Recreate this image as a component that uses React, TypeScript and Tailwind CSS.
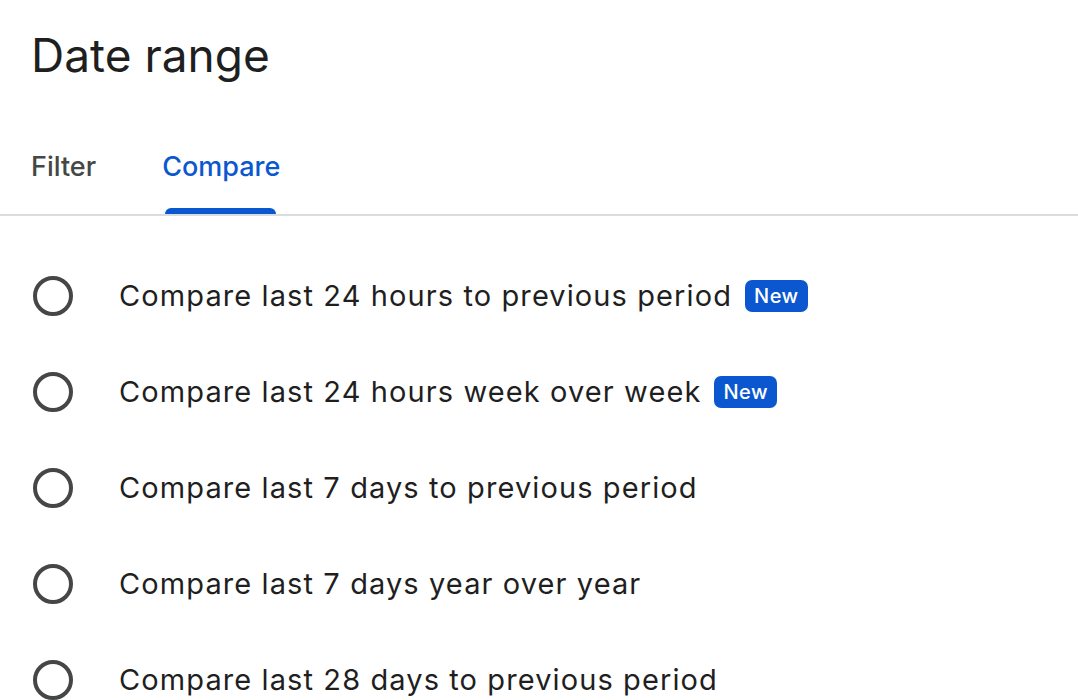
const options = [
  { label: "Compare last 24 hours to previous period", isNew: true },
  { label: "Compare last 24 hours week over week", isNew: true },
  { label: "Compare last 7 days to previous period", isNew: false },
  { label: "Compare last 7 days year over year", isNew: false },
  { label: "Compare last 28 days to previous period", isNew: false },
];

export default function App() {
  return (
    <div
      className="w-[1078px] h-[700px] overflow-hidden bg-white text-[#1f1f1f]"
      style={{ fontFamily: "Inter, Roboto, sans-serif" }}
    >
      <h1 className="pl-[31px] pt-[23px] text-[46px] leading-[64px] font-normal">Date range</h1>

      <div className="mt-[62px] flex items-end gap-[66px] border-b-2 border-[#dadce0] pl-[31px]">
        <div className="pb-[29px] text-[27px] leading-[36px] font-medium text-[#444746]">Filter</div>
        <div className="relative pb-[29px] text-[27px] leading-[36px] font-medium text-[#0b57d0]">
          Compare
          <span className="absolute bottom-0 left-[3px] right-[4px] h-[6px] rounded-t-[6px] bg-[#0b57d0]" />
        </div>
      </div>

      <ul className="pt-[32px]">
        {options.map((o) => (
          <li key={o.label} className="flex h-[96px] items-center">
            <span className="ml-[33px] h-[40px] w-[40px] rounded-full border-[4px] border-[#444746]" />
            <span className="ml-[46px] text-[29px] leading-[40px] tracking-[1.1px] text-[#1f1f1f]">{o.label}</span>
            {o.isNew && (
              <span className="ml-[13px] flex h-[32px] items-center rounded-[7px] bg-[#0b57d0] px-[9px] text-[20px] font-medium tracking-[0.5px] text-white">
                New
              </span>
            )}
          </li>
        ))}
      </ul>
    </div>
  );
}
